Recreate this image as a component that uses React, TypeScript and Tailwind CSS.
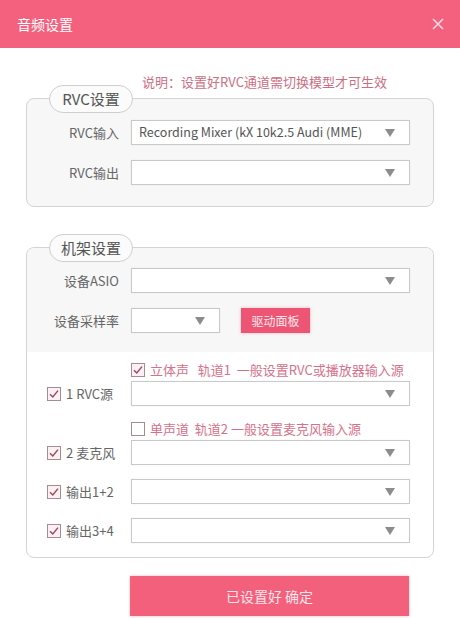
import React from "react";

const FONT = { fontFamily: '"Noto Sans CJK SC", "Noto Sans", sans-serif' };

function Arrow() {
  return (
    <svg width="10" height="8" viewBox="0 0 10 8" className="shrink-0">
      <path d="M0 0 L10 0 L5 8 Z" fill="#8c8c8c" />
    </svg>
  );
}

function Select({ value, width }: { value?: string; width?: string }) {
  return (
    <div
      className={`${width ?? "w-[279px]"} h-[25px] border border-[#c9c9c9] bg-white flex items-center justify-between pl-[7px] pr-[14px] text-[12.5px] text-[#555] shadow-[0_0_2px_rgba(0,0,0,0.05)]`}
    >
      <span className="whitespace-nowrap">{value ?? ""}</span>
      <Arrow />
    </div>
  );
}

function Check({ checked }: { checked: boolean }) {
  return (
    <svg width="14" height="14" viewBox="0 0 14 14" className="shrink-0">
      <rect x="0.5" y="0.5" width="13" height="13" fill={checked ? "#fbf0f3" : "#ffffff"} stroke="#a98a93" />
      {checked && (
        <path d="M3 7.2 L5.8 10 L11 3.6" fill="none" stroke="#9c4b60" strokeWidth="1.5" />
      )}
    </svg>
  );
}

function Legend({ text }: { text: string }) {
  return (
    <div className="absolute left-[22px] top-[-14px] w-[84px] h-[28px] rounded-full border border-[#cfcfcf] bg-[#fbfbfb] flex items-center justify-center text-[15px] text-[#555]">
      {text}
    </div>
  );
}

function LabelRow({ label, children }: { label: string; children: React.ReactNode }) {
  return (
    <div className="flex items-center">
      <div className="w-[104px] pr-[12px] text-right text-[13px] text-[#666] whitespace-nowrap">{label}</div>
      {children}
    </div>
  );
}

function CheckRow({
  label,
  heading,
}: {
  label: string;
  heading?: { checked: boolean; text: React.ReactNode };
}) {
  return (
    <div className="flex items-end">
      <div className="w-[104px] h-[25px] pl-[20px] flex items-center gap-[5px] text-[13px] text-[#666] whitespace-nowrap">
        <Check checked />
        <span>{label}</span>
      </div>
      <div className="flex flex-col">
        {heading && (
          <div className="h-[18px] mb-[2px] flex items-center gap-[5px] text-[13px] text-[#d5718a] whitespace-nowrap">
            <Check checked={heading.checked} />
            <span>{heading.text}</span>
          </div>
        )}
        <Select />
      </div>
    </div>
  );
}

export default function App() {
  return (
    <div className="w-[460px] h-[618px] bg-white overflow-hidden" style={FONT}>
      <div className="h-[48px] bg-[#f3617f] flex items-center justify-between pl-[17px] pr-[16px]">
        <span className="text-[14px] text-white">音频设置</span>
        <svg width="12" height="12" viewBox="0 0 12 12">
          <path d="M1 1 L11 11 M11 1 L1 11" stroke="#fbd9e0" strokeWidth="1.6" />
        </svg>
      </div>

      <div className="mt-[26px] h-[16px] leading-[16px] pl-[142px] text-[13px] text-[#cc6f85] whitespace-nowrap">
        说明：设置好RVC通道需切换模型才可生效
      </div>

      <div className="relative mt-[8px] ml-[26px] w-[408px] border border-[#d4d4d4] rounded-[8px] bg-[#f7f7f7] pt-[21px] pb-[21px] flex flex-col gap-[15px]">
        <Legend text="RVC设置" />
        <LabelRow label="RVC输入">
          <Select value="Recording Mixer (kX 10k2.5 Audi (MME)" />
        </LabelRow>
        <LabelRow label="RVC输出">
          <Select />
        </LabelRow>
      </div>

      <div className="relative mt-[40px] ml-[26px] w-[408px] border border-[#d4d4d4] rounded-[8px] bg-white">
        <Legend text="机架设置" />
        <div className="bg-[#f7f7f7] rounded-t-[8px] pt-[20px] pb-[19px] flex flex-col gap-[15px]">
          <LabelRow label="设备ASIO">
            <Select />
          </LabelRow>
          <LabelRow label="设备采样率">
            <Select width="w-[89px]" />
            <div className="ml-[21px] w-[69px] h-[25px] bg-[#ec5674] flex items-center justify-center text-[12px] text-[#fde7ec] shadow-[0_0_3px_rgba(236,86,116,0.4)]">
              驱动面板
            </div>
          </LabelRow>
        </div>
        <div className="pt-[9px] pb-[14px] flex flex-col gap-[14px]">
          <CheckRow
            label="1 RVC源"
            heading={{ checked: true, text: <>立体声&nbsp;&nbsp;&nbsp;轨道1&nbsp;&nbsp;一般设置RVC或播放器输入源</> }}
          />
          <CheckRow
            label="2 麦克风"
            heading={{ checked: false, text: <>单声道&nbsp;&nbsp;轨道2&nbsp;一般设置麦克风输入源</> }}
          />
          <CheckRow label="输出1+2" />
          <CheckRow label="输出3+4" />
        </div>
      </div>

      <div className="mt-[18px] ml-[130px] w-[279px] h-[40px] bg-[#f2607c] flex items-center justify-center text-[14px] text-[#fde3e9] shadow-[0_0_3px_rgba(200,60,90,0.35)]">
        已设置好 确定
      </div>
    </div>
  );
}
